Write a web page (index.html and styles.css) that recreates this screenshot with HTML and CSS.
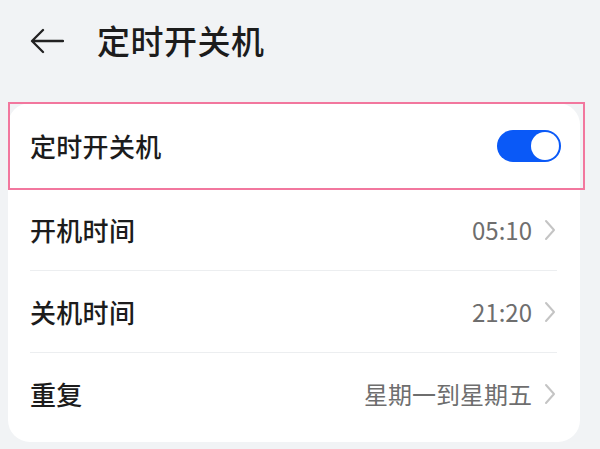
FILE: index.html
```html
<!DOCTYPE html>
<html lang="zh">
<head>
<meta charset="utf-8">
<link rel="stylesheet" href="styles.css">
</head>
<body>
<div class="page">
  <header class="header">
    <svg class="back" width="34" height="26" viewBox="0 0 34 26">
      <path d="M33 13H3M13 2L2 13L13 24" fill="none" stroke="#222222" stroke-width="2.3" stroke-linecap="round" stroke-linejoin="round"/>
    </svg>
    <h1 class="title">定时开关机</h1>
  </header>
  <section class="card">
    <div class="highlight"></div>
    <div class="row row-first">
      <span class="label">定时开关机</span>
      <span class="toggle"><span class="knob"></span></span>
    </div>
    <div class="row row-line">
      <span class="label">开机时间</span>
      <span class="value">05:10</span>
      <svg class="chev" width="12" height="22" viewBox="0 0 12 22"><polyline points="2,2 10,11 2,20" fill="none" stroke="#c4c4c4" stroke-width="2" stroke-linecap="round" stroke-linejoin="round"/></svg>
    </div>
    <div class="row row-line">
      <span class="label">关机时间</span>
      <span class="value">21:20</span>
      <svg class="chev" width="12" height="22" viewBox="0 0 12 22"><polyline points="2,2 10,11 2,20" fill="none" stroke="#c4c4c4" stroke-width="2" stroke-linecap="round" stroke-linejoin="round"/></svg>
    </div>
    <div class="row row-last">
      <span class="label">重复</span>
      <span class="value">星期一到星期五</span>
      <svg class="chev" width="12" height="22" viewBox="0 0 12 22"><polyline points="2,2 10,11 2,20" fill="none" stroke="#c4c4c4" stroke-width="2" stroke-linecap="round" stroke-linejoin="round"/></svg>
    </div>
  </section>
</div>
</body>
</html>
```
FILE: styles.css
```css
* { box-sizing: border-box; }
html, body {
  margin: 0;
  padding: 0;
  width: 600px;
  height: 449px;
  overflow: hidden;
  background: #f1f3f5;
  font-family: "Noto Sans CJK SC", "Noto Sans", sans-serif;
  color: #1c1c1c;
}
.page {
  padding: 0 20px 0 8px;
}
.header {
  display: flex;
  align-items: center;
  height: 103px;
  padding-left: 22px;
  padding-bottom: 22px;
}
.back {
  display: block;
  flex: none;
}
.title {
  margin: 0 0 0 33px;
  font-size: 33px;
  font-weight: 500;
  line-height: 1;
  letter-spacing: 0.5px;
}
.card {
  position: relative;
  background: #ffffff;
  border-radius: 22px;
  padding: 0 23px 7px 22px;
}
.highlight {
  position: absolute;
  top: -1px;
  left: 0;
  right: -5px;
  height: 88px;
  border: 2px solid #f2779e;
  pointer-events: none;
}
.row {
  display: flex;
  align-items: center;
  height: 82px;
}
.row-first {
  height: 86px;
}
.row-line {
  border-bottom: 1px solid #eceef0;
}
.label {
  flex: 1;
  font-size: 26px;
  font-weight: 500;
  line-height: 1;
  letter-spacing: 0.3px;
}
.value {
  font-size: 24px;
  color: #6e6e6e;
  line-height: 1;
  margin-right: 12px;
}
.chev {
  display: block;
  flex: none;
  margin-right: 1px;
}
.toggle {
  position: relative;
  flex: none;
  width: 64px;
  height: 32px;
  border-radius: 16px;
  background: #0a59f7;
  margin-right: -4px;
}
.knob {
  position: absolute;
  top: 2px;
  right: 2px;
  width: 28px;
  height: 28px;
  border-radius: 50%;
  background: #ffffff;
}
```
